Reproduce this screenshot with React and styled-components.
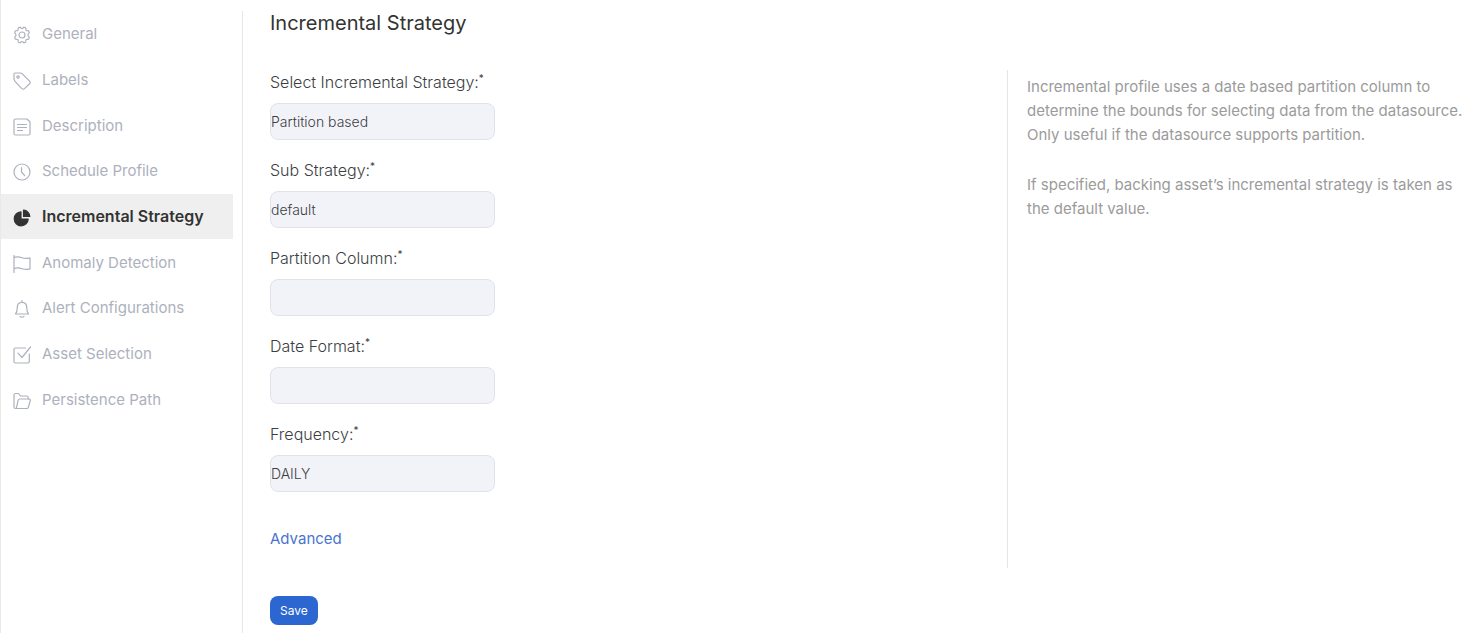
import * as React from 'react';
import styled, { createGlobalStyle } from 'styled-components';

const GearIcon = () => (
    <Svg viewBox="0 0 18 18">
        <path d="M6.500 1.400q.7-.4 1.100.2.600.9 1.400.9t1.400-.9q.4-.6 1.100-.2l1 .4q.6.300.4 1-.2 1.100.2 1.600.5.500 1.500.3.800-.2 1.100.4l.5 1.100q.3.700-.3 1.100-.9.600-.9 1.700t.9 1.700q.6.400.3 1.100l-.5 1.100q-.3.600-1.100.4-1-.2-1.500.3-.4.500-.2 1.600.2.700-.4 1l-1 .4q-.7.400-1.100-.2-.6-.9-1.400-.9t-1.400.9q-.4.600-1.100.2l-1-.4q-.6-.3-.4-1 .2-1.100-.2-1.600-.5-.5-1.500-.3-.8.200-1.100-.4l-.5-1.100q-.3-.7.3-1.100.900-.6.900-1.700t-.9-1.700q-.6-.4-.3-1.100l.5-1.100q.3-.6 1.100-.4 1 .2 1.500-.3.400-.5.200-1.600-.2-.7.400-1z" />
        <circle cx="9" cy="9" r="3" />
    </Svg>
);

const TagIcon = () => (
    <Svg viewBox="0 0 18 18">
        <path d="M1 2.200v5.300l1 1.800 6.800 7.300c1 .9 1.700.9 2.600 0l5.200-4.900c.8-.9.8-1.700 0-2.500L9.300 1.800 7.500 1H2.200Q1 1 1 2.200z" />
        <circle cx="5" cy="5" r="1.200" />
    </Svg>
);

const NoteIcon = () => (
    <Svg viewBox="0 0 18 18">
        <path d="M2.500 1h11.300L17 3.800v11.700q0 1.500-1.500 1.500h-13Q1 17 1 15.500v-13Q1 1 2.500 1z" />
        <path d="M4.500 6.500h9M4.500 9.500h9M4.500 12.500h5" />
    </Svg>
);

const ClockIcon = () => (
    <Svg viewBox="0 0 18 18">
        <circle cx="9" cy="9" r="8" />
        <path d="M8.500 4.500v4.500l3.200 3.600" />
    </Svg>
);

const PieIcon = () => (
    <Svg viewBox="0 0 18 18">
        <path d="M8 2.800V10h7.200A7 7 0 1 1 8 2.800z" fill="currentColor" />
        <path d="M10.500 1.200a6.500 6.500 0 0 1 6.300 6.300h-6.300z" fill="currentColor" />
    </Svg>
);

const FlagIcon = () => (
    <Svg viewBox="0 0 18 18">
        <path d="M1 .5v17M1 2.500c3-1.300 5-.9 8 .2s5 1 8 .2v11c-3 .9-5 .8-8-.2s-5-1.200-8 0" />
    </Svg>
);

const BellIcon = () => (
    <Svg viewBox="0 0 18 18">
        <path d="M9 .5v1.700M2.500 14h13c-1.300-1.300-1.700-2.300-1.700-6 0-3.500-1.800-5.700-4.800-5.700S4.200 4.500 4.200 8c0 3.700-.4 4.700-1.700 6z" />
        <path d="M7 16.300c1 1 3 1 4 0" />
    </Svg>
);

const CheckIcon = () => (
    <Svg viewBox="0 0 18 18">
        <path d="M12.500 2H2.500Q1 2 1 3.500v12Q1 17 2.500 17h12.300q1.500 0 1.500-1.500V8" />
        <path d="M5 7.200l4 4.300L17.500 1" />
    </Svg>
);

const FolderIcon = () => (
    <Svg viewBox="0 0 18 18">
        <path d="M2.500 16.500Q1 16.500 1 15V3q0-1.500 1.500-1.500h3l2 2.500h6.200q1.500 0 1.500 1.500v1.500" />
        <path d="M2.500 16.500h11.300q1.200 0 1.500-1.200L17.300 8.500q.2-1.500-1.200-1.500H6.700q-1.200 0-1.500 1.200L3.500 15.300q-.3 1.200-1 1.200z" />
    </Svg>
);

const menu = [
    { name: 'General', icon: GearIcon },
    { name: 'Labels', icon: TagIcon },
    { name: 'Description', icon: NoteIcon },
    { name: 'Schedule Profile', icon: ClockIcon },
    { name: 'Incremental Strategy', icon: PieIcon },
    { name: 'Anomaly Detection', icon: FlagIcon },
    { name: 'Alert Configurations', icon: BellIcon },
    { name: 'Asset Selection', icon: CheckIcon },
    { name: 'Persistence Path', icon: FolderIcon },
];

const fields = [
    { id: 'strategy', label: 'Select Incremental Strategy:', options: ['Partition based'] },
    { id: 'subStrategy', label: 'Sub Strategy:', options: ['default'] },
    { id: 'partitionColumn', label: 'Partition Column:' },
    { id: 'dateFormat', label: 'Date Format:' },
    { id: 'frequency', label: 'Frequency:', options: ['DAILY'] },
];

export default function App() {

    const [active, setActive] = React.useState('Incremental Strategy');

    const handleMenu = (event, name) => {
        event.preventDefault();
        setActive(name);
    };

    const handleSave = (event) => {
        event.preventDefault();
    };

    return (
        <Page>
            <GlobalStyle />
            <Sidebar>
                <Menu>
                    {menu.map(({ name, icon: Icon }) => (
                        <MenuItem key={name}>
                            <MenuLink href="#" $active={name === active} onClick={(event) => handleMenu(event, name)}>
                                <Icon />
                                <span>{name}</span>
                            </MenuLink>
                        </MenuItem>
                    ))}
                </Menu>
            </Sidebar>
            <Main>
                <Title>Incremental Strategy</Title>
                <Columns>
                    <Form onSubmit={handleSave}>
                        {fields.map((field) => (
                            <Field key={field.id}>
                                <Label htmlFor={field.id}>{field.label}<Star>*</Star></Label>
                                {field.options ? (
                                    <Select id={field.id}>
                                        {field.options.map((option) => <option key={option}>{option}</option>)}
                                    </Select>
                                ) : (
                                    <Input id={field.id} type="text" />
                                )}
                            </Field>
                        ))}
                        <Advanced href="#">Advanced</Advanced>
                        <Save type="submit">Save</Save>
                    </Form>
                    <Help>
                        <p>
                            Incremental profile uses a date based partition column to determine the bounds
                            for selecting data from the datasource. Only useful if the datasource supports partition.
                        </p>
                        <p>If specified, backing asset’s incremental strategy is taken as the default value.</p>
                    </Help>
                </Columns>
            </Main>
        </Page>
    );
}

//styling...

const GlobalStyle = createGlobalStyle`
    * {
        box-sizing: border-box;
    }
    body {
        margin: 0;
        background: #fff;
        color: #3c3e42;
        font-family: Inter, "Liberation Sans", sans-serif;
        font-size: 16px;
    }
`;

const Svg = styled.svg`
    width: 18px;
    height: 18px;
    margin-top: 3px;
    flex: none;
    fill: none;
    stroke: currentColor;
    stroke-width: 1.2;
    stroke-linecap: round;
    stroke-linejoin: round;
`;

const Page = styled.div`
    display: flex;
    min-height: 100vh;
    border-left: 1px solid #e9e9ec;
`;

const Sidebar = styled.nav`
    flex: none;
    width: 242px;
    margin-top: 11px;
    padding-right: 9px;
    border-right: 1px solid #e6e7ea;
`;

const Menu = styled.ul`
    display: grid;
    grid-auto-rows: 1fr;
    min-height: 411px;
    margin: 0;
    padding: 0;
    list-style: none;
`;

const MenuItem = styled.li`
    display: grid;
`;

const MenuLink = styled.a`
    display: flex;
    align-items: center;
    gap: 11px;
    padding-left: 12px;
    background: ${(props) => (props.$active ? '#efefef' : 'none')};
    color: ${(props) => (props.$active ? '#333' : '#adb1bd')};
    font-weight: ${(props) => (props.$active ? 600 : 400)};
    font-size: ${(props) => (props.$active ? '16px' : '15px')};
    text-decoration: none;
`;

const Main = styled.main`
    flex: 1;
    padding: 8px 0 8px 27px;
`;

const Title = styled.h1`
    margin: 0;
    color: #333;
    font-size: 20px;
    font-weight: 400;
    line-height: 30px;
`;

const Columns = styled.div`
    display: flex;
    align-items: flex-start;
    padding-top: 32px;
`;

const Form = styled.form`
    flex: 1;
    display: flex;
    flex-direction: column;
    align-items: flex-start;
`;

const Field = styled.div`
    display: flex;
    flex-direction: column;
    width: 225px;
    height: 88px;
`;

const Label = styled.label`
    height: 33px;
    font-weight: 300;
    line-height: 24px;
    white-space: nowrap;
`;

const Star = styled.sup`
    font-size: 10px;
    font-weight: 400;
    line-height: 0;
`;

const Input = styled.input`
    appearance: none;
    width: 100%;
    height: 37px;
    padding: 0;
    border: 1px solid #e1e3e9;
    border-radius: 8px;
    background: #f2f3f8;
    color: #3c3e42;
    font-family: inherit;
    font-size: 14px;
    font-weight: 300;
`;

const Select = styled(Input).attrs({ as: 'select' })``;

const Advanced = styled.a`
    margin-top: 17px;
    color: #4a74cf;
    font-size: 15px;
    line-height: 24px;
    text-decoration: none;
`;

const Save = styled.button`
    height: 29px;
    margin-top: 45px;
    padding: 0 10px;
    border: none;
    border-radius: 8px;
    background: #2b66d1;
    color: #fff;
    font-family: inherit;
    font-size: 12px;
    cursor: pointer;
`;

const Help = styled.aside`
    width: 472px;
    min-height: 498px;
    padding: 5px 0 0 19px;
    border-left: 1px solid #e5e5e5;
    color: #9b9b9b;
    font-size: 15px;
    line-height: 24px;
    p {
        margin: 0 0 26px;
    }
`;
